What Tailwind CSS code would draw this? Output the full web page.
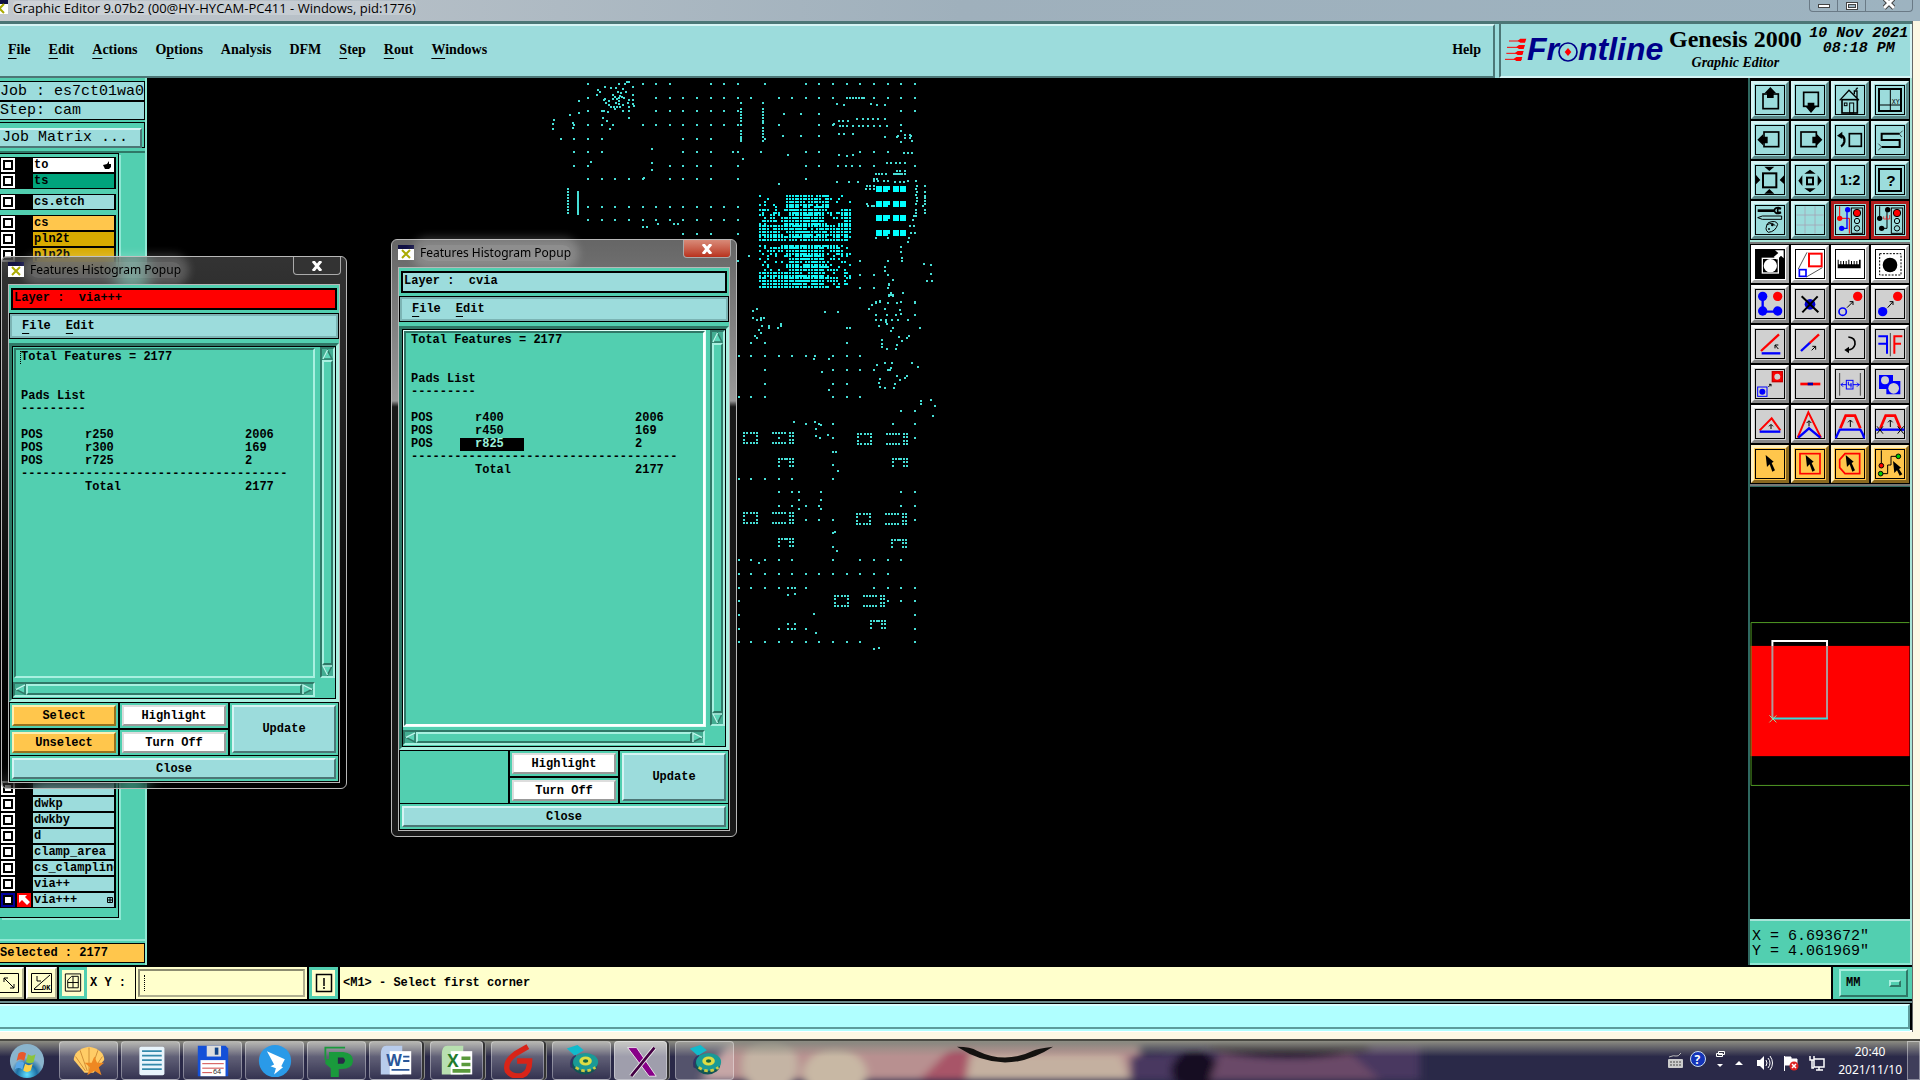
<!DOCTYPE html>
<html lang="en">
<head>
<meta charset="utf-8">
<title>Graphic Editor 9.07b2</title>
<script src="https://cdn.jsdelivr.net/npm/@tailwindcss/browser@4"></script>
</head>
<body class="relative flex h-screen flex-col overflow-hidden bg-black font-['Liberation_Mono',monospace] text-black">

<!-- Main window -->
<div class="flex min-h-0 flex-1 flex-col bg-[#fdf8e4] pb-[7px]">
  <div class="flex h-[21px] shrink-0 items-start justify-between bg-linear-to-r from-[#c3c8cd] via-[#9fb0bc] to-[#9db3c0]">
    <div class="flex h-[15px] items-center gap-[5px]">
      <svg class="h-4 w-2 shrink-0" viewBox="8 0 8 16"><rect x="0" width="16" height="14" fill="#fff"/><rect width="16" height="4" fill="#114"/><path d="M3 4l9 9M12 4l-9 9" stroke="#aa0" stroke-width="2"/></svg>
      <h1 class="rounded bg-white/20 font-['Open_Sans',sans-serif] text-[13px] leading-[14px] whitespace-nowrap">Graphic Editor 9.07b2 (00@HY-HYCAM-PC411 - Windows, pid:1776)</h1>
    </div>
    <div class="mr-[7px] flex h-3 rounded-b border border-t-0 border-[#6a7a86] text-white">
      <button aria-label="Minimize" class="flex w-7 items-center justify-center border-r border-[#6a7a86]"><span class="h-1 w-3 border border-[#444] bg-white"></span></button>
      <button aria-label="Restore" class="flex w-7 items-center justify-center border-r border-[#6a7a86]"><span class="h-2 w-3 border border-[#444] bg-white p-px"><span class="block h-1 border border-[#444] bg-[#9db3c0]"></span></span></button>
      <button aria-label="Close window" class="flex w-[46px] items-center justify-center"><svg class="h-3 w-3" viewBox="0 0 12 12"><path d="M1-2l10 10M11-2l-10 10" stroke="#444" stroke-width="5"/><path d="M1-2l10 10M11-2l-10 10" stroke="#fff" stroke-width="3"/></svg></button>
    </div>
  </div>

  <div class="mr-[7px] flex min-h-0 flex-1 flex-col border-r border-[#666]">
    <!-- Menu and brand -->
    <header class="flex h-[57px] shrink-0 border-t-[3px] border-[#4c7676] bg-[#9cdcdc] font-['Liberation_Serif',serif]">
      <nav class="flex flex-1 items-center gap-[18px] border-y-2 border-r-2 border-t-[#d6f4f4] border-r-[#4c7676] border-b-[#4c7676] pb-[2px] pl-2 text-[14px] leading-5 font-bold shadow-[0_2px_0_#d6f4f4]">
        <a href="#"><u class="underline-offset-4">F</u>ile</a><a href="#"><u class="underline-offset-4">E</u>dit</a><a href="#"><u class="underline-offset-4">A</u>ctions</a><a href="#">O<u class="underline-offset-4">p</u>tions</a><a href="#">Analysis</a><a href="#">DFM</a><a href="#"><u class="underline-offset-4">S</u>tep</a><a href="#"><u class="underline-offset-4">R</u>out</a><a href="#"><u class="underline-offset-4">W</u>indows</a>
        <a href="#" class="mr-3 ml-auto">Help</a>
      </nav>
      <div class="ml-1 flex w-[413px] items-center border-2 border-t-0 border-l-[#4c7676] border-r-[#d6f4f4] border-b-[#d6f4f4] pb-[2px] pl-1">
        <svg class="h-[26px] w-[22px] shrink-0" viewBox="0 0 66 78"><g stroke="#f00" stroke-width="3"><path d="M12 15H60M6 34H56M4 52H54M0 70H50"/></g><g fill="#f00"><path d="M38 14l8-6h18l-4 12H46zM34 33l8-6h18l-4 12H42zM30 51l8-6h18l-4 12H38zM26 69l8-6h18l-4 12H34z"/></g></svg>
        <div class="flex items-center font-['Liberation_Sans',sans-serif] text-[32px] leading-8 font-bold text-[#00008a] italic">
          <span>Fr</span>
          <svg class="mt-[5px] -ml-px h-5 w-5" viewBox="0 0 60 60"><circle cx="30" cy="30" r="27" fill="none" stroke="#00008a" stroke-width="5"/><path d="M30 18l10 12-10 12-10-12z" fill="#f00"/></svg>
          <span>ntline</span>
        </div>
        <div class="ml-1 flex w-[136px] flex-col items-center whitespace-nowrap">
          <span class="text-[24px] leading-7 font-bold">Genesis 2000</span>
          <span class="text-[14px] leading-5 font-bold italic">Graphic Editor</span>
        </div>
        <div class="mb-4 ml-[6px] text-center font-['Liberation_Mono',monospace] text-[15px] leading-[15px] font-bold whitespace-nowrap italic">10 Nov 2021<br>08:18 PM</div>
      </div>
    </header>

    <!-- Workspace -->
    <div class="flex min-h-0 flex-1">
      <aside class="flex w-[147px] shrink-0 flex-col border-r-2 border-[#8fe8d4] bg-[#52cfb0]">
        <div class="mt-[3px] h-[20px] border border-l-0 border-black bg-[#9cdcdc] text-[15px] leading-[19px] whitespace-nowrap">Job : es7ct01wa0</div>
        <div class="h-[19px] border border-l-0 border-black bg-[#9cdcdc] text-[15px] leading-[18px]">Step: cam</div>
        <div class="mt-[2px] h-[26px] border border-l-0 border-black p-[2px] pl-0"><button class="h-full w-full border-2 border-l-0 border-t-[#d6f4f4] border-r-[#4c7676] border-b-[#4c7676] bg-[#9cdcdc] pl-[2px] text-left text-[15px] leading-4">Job Matrix ...</button></div>
        <div class="mt-[3px] h-[2px] bg-[#2f7867]"></div>
        <div class="mr-[26px] flex min-h-0 flex-1 flex-col border-t border-r border-b border-black pb-[9px] shadow-[2px_2px_0_#8fe8d4]">
          <div id="layers-top" class="mt-[3px] mr-[2px]"></div>
          <div class="mr-[2px] flex-1 bg-black"></div>
          <div id="layers-bottom" class="mr-[2px]"></div>
        </div>
        <div class="mt-[21px] h-[2px] bg-[#8fe8d4]"></div>
        <div class="my-[2px] h-[20px] border border-l-0 border-black bg-[#ffc64c] text-[12px] leading-[18px] font-bold">Selected : 2177</div>
      </aside>

      <main class="relative flex-1 overflow-hidden bg-black">
        <svg class="absolute top-0 left-0 h-full w-full"><g transform="translate(-147 -78)"><path id="dots" fill="#46dfd6" shape-rendering="crispEdges"/><path id="core" fill="#14f4f4" shape-rendering="crispEdges"/><path id="bars" fill="#00ffff"/></g></svg>
      </main>

      <aside class="flex w-[164px] shrink-0 flex-col border-r-2 border-l-2 border-l-[#2f6860] border-r-[#a8e4d8] bg-black">
        <div id="tools-a" class="grid grid-cols-4 gap-[2px] border-b-2 border-[#a8e4d8] pt-[3px] pr-px pb-[1px] pl-px"></div>
        <div id="tools-b" class="grid grid-cols-4 gap-[2px] border-t-2 border-b-2 border-[#777] pt-px pr-px pb-[1px] pl-px"></div>
        <div class="h-px bg-[#2f6860]"></div>
        <div class="relative mt-px min-h-0 flex-1">
          <svg class="absolute inset-0 h-full w-full" viewBox="0 0 160 434" preserveAspectRatio="xMidYMin meet"><rect y="159" width="160" height="111" fill="#f00"/><path d="M160 135.500H.5V299.500H160" fill="none" stroke="#509a24"/><path d="M22 159v-5H77v5" fill="none" stroke="#fff" stroke-width="2"/><path d="M22 159v73M77 159v73" stroke="#b09a9a" stroke-width="2"/><path d="M22 232H78" stroke="#35dcdc" stroke-width="2"/><path d="M19 229l7 7M26 229l-7 7" stroke="#9cdc9c"/></svg>
        </div>
        <div class="h-[46px] shrink-0 border-y-2 border-t-[#a8e4d8] border-b-[#8fe8d4] bg-[#52cfb0] pt-[8px] pl-[2px] text-[15px] leading-[15px] whitespace-nowrap"><p>X = 6.693672"</p><p>Y = 4.061969"</p></div>
      </aside>
    </div>

    <!-- Command line -->
    <form class="flex h-[36px] shrink-0 items-stretch border-y-2 border-black bg-[#ffffcc] text-[12px] font-bold">
      <div class="flex gap-[2px] bg-black">
        <button type="button" aria-label="Diagonal" class="w-6 border-2 border-l-0 border-t-white border-r-[#b0b090] border-b-[#b0b090] bg-[#ffffcc]"><svg class="h-7 w-5" viewBox="10 0 20 28"><path d="M6 4.500H28.500V23.500H6M14 9l10 10M14 13V9h4M24 15v4h-4" fill="none" stroke="#000"/></svg></button>
        <button type="button" aria-label="Angle" class="w-[31px] border-2 border-t-white border-l-white border-r-[#b0b090] border-b-[#b0b090] bg-[#ffffcc]"><svg class="h-7 w-[27px]" viewBox="0 0 27 28"><path d="M3.500 4.500h20v19h-20zM6 20L22 6M6 20.500H15M9 7v5h4" fill="none" stroke="#000"/><text x="14" y="21" font-size="7">OK</text></svg></button>
        <button type="button" aria-label="Grid" class="w-[28px] border-[3px] border-[#52cfb0] bg-[#ffffcc]"><svg class="h-[26px] w-[22px]" viewBox="0 0 23 26"><path d="M3.500 3.500h16v18h-16zM6 18V10l4-4h7v12zM11.500 6v12M6 12.500h11" fill="none" stroke="#000"/></svg></button>
      </div>
      <label for="xy" class="w-[48px] pl-[3px] leading-8 whitespace-nowrap"><span>X Y :</span></label>
      <div class="relative w-[174px] border-r-2 border-l border-black p-[2px]"><input id="xy" class="h-full w-full border-2 border-t-[#8c8c70] border-l-[#8c8c70] border-r-[#b0b090] border-b-[#b0b090] bg-[#ffffcc] px-1 outline-none"><span class="absolute top-2 left-2 h-4 border-l border-dotted border-black"></span></div>
      <button type="button" aria-label="Alert" class="w-[31px] border-r-2 border-r-black bg-[#ffffcc] shadow-[inset_0_0_0_3px_#52cfb0]"><svg class="mx-auto h-[26px] w-[22px]" viewBox="0 0 22 26"><path d="M3.500 4.500h15v17h-15zM11 8v8M11 17v2" fill="none" stroke="#000" stroke-width="1.500"/></svg></button>
      <output class="flex-1 pl-[3px] leading-8">&lt;M1&gt; - Select first corner</output>
      <div class="w-[81px] border-l-2 border-black bg-[#52cfb0] py-[2px] pr-1 pl-[6px]">
        <button type="button" class="flex h-full w-full items-center justify-between border-2 border-t-[#a8f0e0] border-l-[#a8f0e0] border-r-[#2f7867] border-b-[#2f7867] px-[5px]">MM<span class="h-[7px] w-3 border-2 border-t-[#a8f0e0] border-l-[#a8f0e0] border-r-[#2f7867] border-b-[#2f7867]"></span></button>
      </div>
    </form>
    <div class="h-[31px] shrink-0 border-t-2 border-b-2 border-t-[#6c8c8c] border-b-white bg-black pt-px pr-[2px] pb-px"><div class="h-full border-y-2 border-r-2 border-t-[#d8ffff] border-r-[#5c9c9c] border-b-[#5c9c9c] bg-[#b0ffff] shadow-[0_2px_0_#b0ffff]"></div></div>
  </div>
</div>

<!-- Popups -->
<div id="popup-via"></div>
<div id="popup-cvia"></div>

<!-- Taskbar -->
<footer class="relative flex h-[41px] shrink-0 items-center overflow-hidden border-t-2 border-[#4a4a44] bg-[#2a2948] font-['Open_Sans',sans-serif] text-white">
  <svg class="absolute inset-0 h-full w-full" viewBox="0 0 1920 40" preserveAspectRatio="none">
    <defs><filter id="soft"><feGaussianBlur stdDeviation="4"/></filter><linearGradient id="gl" x2="0" y2="1"><stop stop-color="#8c8c82"/><stop offset=".4" stop-color="#8c8c82" stop-opacity="0"/></linearGradient></defs>
    <g filter="url(#soft)"><path d="M730 0H1140V40H700z" fill="#b89090"/><ellipse cx="770" cy="25" rx="28" ry="30" fill="#c4b4a4"/><ellipse cx="835" cy="34" rx="32" ry="26" fill="#c8b8a4"/><path d="M950 8l20-2v34h-50z" fill="#a85468"/><path d="M970 14h150l10 26H966z" fill="#c4b0a0"/><path d="M1130 15L1420 0V40H1130z" fill="#4a3860"/><ellipse cx="1195" cy="30" rx="24" ry="20" fill="#151024"/><path d="M1210 0h160v10q-80 14-160 0z" fill="#1c1520"/><path d="M1220 12q70 14 130 0l30 28h-170z" fill="#6a4a68"/></g>
    <rect width="1920" height="40" fill="url(#gl)"/>
    <path d="M957 6Q1005 38 1053 6q-16 2-20 4-28 14-56 0-6-4-20-4z" fill="#141210"/>
  </svg>
  <div class="relative flex flex-1 items-center gap-[3px]">
    <button aria-label="Start" class="flex w-[54px] justify-center"><svg class="h-9 w-[38px]" viewBox="0 0 38 38"><defs><radialGradient id="orb" cy=".9"><stop stop-color="#5fe0ff"/><stop offset=".6" stop-color="#1d6fa5"/><stop offset="1" stop-color="#8ab4cc"/></radialGradient></defs><circle cx="19" cy="19" r="18" fill="url(#orb)"/><path d="M10 11q4-3 8 0l-2 8q-4-3-8 0z" fill="#e8582c"/><path d="M20 12q4 3 8 0l-2 8q-4 3-8 0z" fill="#8cc43c"/><path d="M8 21q4-3 8 0l-2 7q-4-3-8 0z" fill="#5aa8e8"/><path d="M17 22q4 3 8 0l-2 7q-4 3-8 0z" fill="#fcd048"/></svg></button>
    <div id="tasks" class="ml-[2px] flex gap-[3px]"></div>
  </div>
  <div class="relative flex items-center gap-[10px]">
    <svg class="h-4 w-4" viewBox="0 0 16 16"><rect y="6" width="15" height="9" rx="1" fill="#ccc"/><path d="M2 9h11M2 12h11" stroke="#444" stroke-dasharray="2 1"/><path d="M1 4q5-2 7-1t5-3" stroke="#bbb" fill="none"/></svg>
    <svg class="-mt-1 -ml-[4px] h-4 w-4" viewBox="0 0 16 16"><circle cx="8" cy="8" r="7.500" fill="#1434b8" stroke="#cde"/><text x="4.500" y="12.500" font-size="12" font-weight="bold" fill="#fff">?</text></svg>
    <svg class="-mt-1 h-[18px] w-[9px]" viewBox="0 0 9 18"><path d="M2.500 1.500h6v3h-6zM.5 3.500h6v3h-6z" fill="#334" stroke="#fff"/><path d="M1 14h6l-3 3z" fill="#fff"/></svg>
    <svg class="mt-1 h-2 w-2" viewBox="0 0 8 8"><path d="M0 6l4-4 4 4z" fill="#fff"/></svg>
    <svg class="mt-1 ml-1 h-4 w-4" viewBox="0 0 16 16"><path d="M0 5h3l4-4v14l-4-4H0z" fill="#fff"/><path d="M9 5q2 3 0 6M11 3q4 5 0 10M13 1q5 7 0 14" stroke="#fff" fill="none"/></svg>
    <svg class="mt-1 h-4 w-4" viewBox="0 0 16 16"><path d="M1.500 1v15M2 2h6v2h6v6H2z" stroke="#fff" fill="#fff"/><circle cx="11" cy="11" r="4.500" fill="#d22"/><path d="M9 9l4 4M13 9l-4 4" stroke="#fff" stroke-width="1.500"/></svg>
    <svg class="mt-1 h-4 w-4" viewBox="0 0 16 16"><path d="M5 4h10v8H5zM7 15h7M10 12v3M1 1v4h4V1M3 5v8h2" stroke="#fff" stroke-width="1.500" fill="none"/></svg>
    <div class="ml-[3px] text-center font-['Noto_Sans',sans-serif] text-[12px] leading-[18px]">20:40<br>2021/11/10</div>
    <button aria-label="Show desktop" class="-ml-[5px] h-[39px] w-[13px] border border-white/40 bg-white/10"></button>
  </div>
</footer>

<script>
const $ = id => document.getElementById(id);

/* Layer list */
function layer(name, bg, opts = {}) {
  const box = opts.active ? 'border-[#0000a0]' : 'border-white';
  const mark = opts.active ? '<svg class="h-[14px] w-[14px] bg-[#f00]" viewBox="0 0 14 14"><path d="M2 2h8l-2 2 5 5-3 3-5-5-3 3z" fill="#fff"/></svg>' : '';
  return `<label class="flex h-4 items-center bg-black ${opts.gap ? 'mb-[5px]' : ''}">
    <input type="checkbox" class="ml-px h-[14px] w-[14px] appearance-none outline-2 -outline-offset-2 ${opts.active ? 'outline-[#0000a0]' : 'outline-white'} border-4 border-black bg-white bg-clip-padding">
    <span class="flex w-[18px] justify-center">${mark}</span>
    <span class="mr-[2px] flex h-[14px] flex-1 items-center justify-between overflow-hidden pl-px text-[12px] leading-[14px] font-bold ${bg}"><span>${name}</span>${opts.end || ''}</span></label>`;
}
const hand = '<svg class="mr-[3px] h-2 w-2 shrink-0" viewBox="0 0 8 8"><path d="M0 4l4-1 2-3v3h2v3L6 8H2L1 6z"/></svg>';
const plus = '<svg class="mr-px h-[6px] w-[6px] shrink-0" viewBox="0 0 6 6"><path d="M.5.5h5v5h-5zM3 0v6M0 3h6" fill="none" stroke="#000"/></svg>';
$('layers-top').innerHTML = layer('to', 'bg-white', {end: hand}) + layer('ts', 'bg-[#00a47c]', {gap: 1}) + layer('cs.etch', 'bg-[#9cdcdc]', {gap: 1}) +
  layer('cs', 'bg-[#ffc64c]') + layer('pln2t', 'bg-[#d8ab00]') + layer('pln2b', 'bg-[#d8ab00]');
$('layers-bottom').innerHTML = ['', 'dwkp', 'dwkby', 'd', 'clamp_area', 'cs_clampline', 'via++'].map(n => layer(n, 'bg-[#9cdcdc]')).join('') + layer('via+++', 'bg-[#9cdcdc]', {active: 1, end: plus});

/* Tool buttons: drawings use a 90-unit box */
const F = (b, s = '') => `<button aria-label="${s}" class="flex h-[38px] w-[38px] items-center justify-center border-[3px] ${b}">`;
const skins = {
  c: 'border-t-[#d6f4f4] border-l-[#d6f4f4] border-r-[#5c8888] border-b-[#5c8888] bg-[#9cdcdc]',
  r: 'border-[#b01c1c] bg-[#9cdcdc]',
  w: 'border-t-white border-l-white border-r-[#aaa] border-b-[#aaa] bg-white',
  g: 'border-t-white border-l-[#eee] border-r-[#888] border-b-[#888] bg-[#d0d0d0]',
  o: 'border-t-[#fff0c0] border-l-[#fff0c0] border-r-[#8a6820] border-b-[#8a6820] bg-[#ffc64c]'
};
function tool(skin, name, art) {
  return F(skins[skin], name) + `<svg class="h-[30px] w-[30px] shrink-0" viewBox="0 0 90 90"><rect x="1.500" y="1.500" width="87" height="87" fill="none" stroke="#000" stroke-width="3"/>${art}</svg></button>`;
}
const sq = (x, y, w, h, s = 5, c = '#000', f = 'none') => `<rect x="${x}" y="${y}" width="${w}" height="${h}" fill="${f}" stroke="${c}" stroke-width="${s}"/>`;
const ln = (d, c = '#000', w = 3, f = 'none') => `<path d="${d}" fill="${f}" stroke="${c}" stroke-width="${w}"/>`;
const dot = (x, y, r, c) => `<circle cx="${x}" cy="${y}" r="${r}" fill="${c}"/>`;
const light = sq(49, 9, 34, 76, 3) + `<circle cx="66" cy="24" r="11" fill="#f00" stroke="#000" stroke-width="3"/><circle cx="66" cy="48" r="8" fill="none" stroke="#000" stroke-width="3"/><circle cx="66" cy="70" r="8" fill="none" stroke="#000" stroke-width="3"/>`;
$('tools-a').innerHTML = [
  tool('c', 'Pan up', sq(24, 27, 46, 44) + '<path d="M46 6l17 18h-7v15H36V24h-7z"/>'),
  tool('c', 'Pan down', sq(26, 22, 44, 42) + '<path d="M38 53h20v13h5L48 84 33 66h5z"/>'),
  tool('c', 'Home', sq(21, 44, 46, 40, 5) + ln('M14 46L42 16 72 46M58 28V18H66V38M62 14l6-6', '#000', 4) + sq(28, 54, 8, 8, 3) + sq(44, 54, 12, 30, 3)),
  tool('c', 'Coordinates', sq(12, 12, 66, 66, 6) + ln('M46 12V78M12 60H78', '#000', 3) + '<text x="50" y="56" font-size="20" font-family="Liberation Mono">XY</text>'),
  tool('c', 'Pan left', sq(27, 21, 44, 44) + '<path d="M7 44L24 28v7h14v20H24v6z"/>'),
  tool('c', 'Pan right', sq(18, 21, 46, 44) + '<path d="M82 44L66 28v7H52v20h14v6z"/>'),
  tool('c', 'Previous view', sq(43, 26, 36, 38) + ln('M12 32H20Q30 36 28 50 26 60 18 64', '#000', 7) + '<path d="M6 32l16-12v22z"/>'),
  tool('c', 'Serpentine', ln('M74 26H20V45H74V66H20', '#000', 6) + ln('M74 26l9-9M80 36l-6-8M20 66l-10-10M20 66l-10 9', '#000', 2)),
  tool('c', 'Zoom in', sq(24, 25, 40, 42, 6) + '<path d="M43 18L28 5h30zM43 72L28 86h30zM16 45L3 30v28zM74 45l14-15v28z"/>'),
  tool('c', 'Zoom out', sq(36, 38, 18, 20, 6) + '<path d="M45 14l17 12H28zM45 82l17-12H28zM10 47l12-16v32zM80 47L68 31v32z"/>'),
  tool('c', 'Scale 1:2', '<text x="15" y="61" font-size="42" font-weight="bold" font-family="Liberation Sans">1:2</text>'),
  tool('c', 'Help', sq(12, 12, 66, 66, 6) + '<text x="34" y="62" font-size="46" font-weight="bold" font-family="Liberation Sans">?</text>'),
  tool('c', 'Setup', ln('M8 17H58', '#000', 8) + ln('M78 11A11 9 0 1 0 78 22M78 11H68V22H78', '#000', 5) + ln('M8 38l14-5H80V43H22z', '#000', 3) + ln('M40 53Q64 44 68 58 62 80 40 82 26 74 40 53zM34 60Q54 50 60 62', '#000', 3) + dot(52, 60, 4, '#000') + dot(42, 72, 3, '#000')),
  tool('c', 'Grid', ln('M30 4V86M60 4V86M4 30H86M4 60H86', '#a89cb0', 2)),
  tool('r', 'Net on', ln('M14 4V40H43V86', '#f00') + ln('M20 70H36V14', '#00f', 4) + dot(14, 40, 8, '#f00') + dot(38, 14, 8, '#00f') + dot(20, 70, 8, '#00f') + light),
  tool('r', 'Net off', ln('M14 4V40M20 70H36V14', '#000', 3) + ln('M26 34V42H44V30M34 32V42', '#f00', 2) + dot(14, 40, 8, '#000') + dot(38, 14, 8, '#000') + dot(20, 70, 8, '#000') + light)
].join('');

$('tools-b').innerHTML = [
  tool('w', 'Invert', '<rect width="90" height="90"/>' + sq(22, 28, 48, 44, 4, '#fff') + dot(46, 50, 20, '#fff') + '<path d="M56 24L70 12 60 4H86V28L78 20 66 32z" fill="#fff"/>'),
  tool('w', 'Resize', sq(42, 14, 38, 38, 6, '#f00') + sq(13, 62, 20, 20, 5, '#00f') + ln('M10 60L36 10M34 84L82 56', '#000', 2)),
  tool('w', 'Measure', '<path d="M8 58V32h3v14h5V36h3v10h5V36h3v10h5V36h3v10h5V32h3v14h5V36h3v10h5V36h3v10h5V36h3v10h5V32h5v26z"/>'),
  tool('w', 'Select pad', `<rect x="14" y="14" width="64" height="64" fill="none" stroke="#000" stroke-width="3" stroke-dasharray="6 4"/>` + dot(45, 48, 22, '#000')),
  tool('g', 'Net', ln('M23 24V68H68', '#00f', 7) + dot(23, 22, 14, '#00f') + dot(23, 66, 14, '#00f') + dot(68, 66, 14, '#00f') + dot(68, 22, 14, '#f00')),
  tool('g', 'Delete', dot(45, 46, 16, '#00c') + ln('M20 22L70 70M68 22L22 70', '#000', 6)),
  tool('g', 'Move', `<circle cx="23" cy="68" r="11" fill="none" stroke="#00f" stroke-width="5"/>` + dot(68, 22, 14, '#f00') + ln('M36 56L54 38M44 38H54V48')),
  tool('g', 'Copy', dot(23, 68, 14, '#00f') + dot(68, 22, 14, '#f00') + ln('M38 56L54 38M44 38H54V48')),
  tool('g', 'Rotate', ln('M18 66L72 16', '#f00', 7) + ln('M20 73H76', '#00f', 7) + ln('M70 60L60 48M60 58V48H70')),
  tool('g', 'Stretch', ln('M18 66L46 40', '#00f', 7) + ln('M44 42L72 16', '#f00', 7) + ln('M50 64L62 52M52 52H62V62')),
  tool('g', 'Arc', ln('M40 24Q62 26 60 46 56 62 38 63', '#000', 5) + '<path d="M28 63l14-10v20z"/>'),
  tool('g', 'Mirror', ln('M10 22H36V74M10 44H36', '#00f', 6) + ln('M46 12V82', '#000', 2) + ln('M82 22H58V74M58 44H78', '#f00', 6)),
  tool('g', 'Substitute', sq(8, 54, 28, 28, 3, '#00f') + dot(22, 68, 9, '#00f') + sq(52, 8, 30, 30, 4, '#c00', '#f00') + dot(67, 23, 9, '#d0d0d0') + ln('M40 54L48 46M42 46H48V52')),
  tool('g', 'Break', ln('M16 45H76', '#f00', 8) + ln('M38 45H54', '#00a', 8)),
  tool('g', 'Spacing', ln('M14 12V80M76 12V80', '#000', 2) + ln('M18 47H34M24 41l-6 6 6 6M54 47H74M66 41l6 6-6 6', '#00f') + sq(34, 34, 20, 26, 3, '#00f') + ln('M40 38V48H50M48 42V56', '#00f')),
  tool('g', 'Merge', '<path d="M12 18H54V36H76V76H34V60H12z" fill="#00f"/>' + dot(30, 34, 12, '#d0d0d0') + dot(56, 58, 16, '#d0d0d0')),
  tool('g', 'Raise corner', ln('M14 64L50 28 76 64', '#f00', 6) + ln('M14 68H76', '#00f', 7) + ln('M48 60V48M42 52l6-6 6 6')),
  tool('g', 'Raise peak', ln('M8 86L40 10 78 86', '#f00', 6) + ln('M10 86L42 58 76 86', '#00f', 7) + ln('M42 52V36M35 42l7-7 7 7')),
  tool('g', 'Raise trapezoid', ln('M16 58L32 20H60L76 58', '#f00', 8) + ln('M2 88Q8 74 14 62H76Q84 74 88 88', '#00f', 7) + ln('M46 54V34M39 40l7-7 7 7')),
  tool('g', 'Trim trapezoid', ln('M16 58L32 20H60L76 58', '#f00', 8) + ln('M2 62H88', '#00f', 7) + ln('M46 54V34M39 40l7-7 7 7M6 52l18 22M24 52L6 74M68 52l18 22M86 52L68 74')),
  tool('o', 'Select', '<path d="M32 18L56 38 50 42 60 64 52 68 44 46 36 54z"/>'),
  tool('o', 'Select rectangle', sq(15, 14, 60, 60, 5, '#f00') + '<path d="M32 18L56 38 50 42 60 64 52 68 44 46 36 54z"/>'),
  tool('o', 'Select polygon', ln('M30 14H74V74H30L14 56V32z', '#f00', 5) + '<path d="M32 18L56 38 50 42 60 64 52 68 44 46 36 54z"/>'),
  tool('o', 'Select net', ln('M19 4V48M18 74H38V48H48V22H66', '#000', 3) + `<g stroke="#000" stroke-width="3">${dot(19, 50, 7, '#f00')}${dot(17, 74, 7, '#0c0')}${dot(70, 22, 7, '#0c0')}</g>` + '<path d="M54 36L78 56 72 60 82 76 74 80 66 64 58 72z"/>')
].join('');

/* Drill view: row lists "y:x,x,..." at three units per pixel */
const sheetA = `42:144,237,256,309,348,390,513,552,594,675,798,837,879,921,960,1002,1044,1083,1125;37:262,267;51:195,279;54:213,228;57:249;60:174;66:180,234,258;75:171,219,279;70:243;77:240;81:225,246;84:252,237,144,348,390,429,471,513,552,594,633,717,756,798,837,879,921,930,939,948,957,965,972,1002,1044,1083,1125;87:195,219,231;91:267,279,192;94:117,237,207;99:198,228,264,603,669;102:237,279,891,993;104:249,207,912,1011,1035;109:282;111:213,222,231,240,267;118:225,603,669;123:144,186,192,249,267,348,390,429,471,513,552,594,1083,1125;127:204,603,669;129:117;132:732,783,837;135:90,603,669;144:189,267,603,669;150:42;153:201,603,669,897,909,924;147:951,969,984,999,1014,1035;159:99,669;162:39,882;165:101,144,186,219,309,348,390,429,471,513,552,594,603,717,837,879,1083;167:900,909,921,939,957,969,984,1002,1020,1041;174:99,669;177:39,210;183:603,669,1083;192:603,669,897,912,939;195:1095,1110;198:729,783,837,1074,1113;201:603,669,1035,1071;203:1095,1110;207:63,102,144,186,429,471,513,603,675;213:603,669,1116;216:1083;237:336;246:102,144,186,429,471,513,579,594,663,798,837,960,1002,1044;249:1092,1104,1116;255:744,897,939;258:921;267:609;276:153;279:336,1041,1053,1068,1080,1095;288:102,144,390,429,471,513,594,798,837,894,918,936,960,1002,1125;300:336;303:1070,1080,1095;312:1008,1017,1026,1038,1062,1068,1074,1080,1086,1095;327:144,186,225,267,309,390,429,471,513,594,798,1011,1002;324:312;333:1002,1014,1032,1044,1104,1128;336:891,927,954,1065,1080,1092;342:717;348:981,990,1002,1131,1155;357:84,978,990,1002,1129;366:84,1131,1155;375:84,1129;378:1155;384:84,1131,1155;393:84,1131,1155;402:84,981,1129,1155;408:984,996,1002,1149;411:84,144,186,225,267,309,348,390,429,471,513,552,594;420:84,1129,1155;429:84,1129,1155;438:1129,1122;450:144,186,225,267,309,348,390,429,471,513,552,594,1119;462:354,402,414;471:309,321;468:1110,1122;489:1113,1125;492:429,471,513,594;504:1008,1044,1107;516:1104;531:1083;546:1083;558:627;564:1086;573:594,960,1044,1086;582:1152;585:1173;591:1035;603:1035;612:1173;615:960,1002,1044;633:1161,1176;630:1059;642:1047;654:960,1002,1044;669:1053;678:1047,1059;696:1083,1125,1008,1020`;
const sheetB = `3:681,696;15:567;24:480,522,564;39:609;45:567,573,579;63:540;69:528,645,564,591;75:516;87:507,171,555;93:159;96:375,414;90:600;105:528,561,588,645;102:603;114:159,183,192;120:171,183,528,543,558,576,594,624;126:558;132:561,243;138:186,207,243,537;144:207,234,441,450,579,660;153:573;150:177;159:183;168:165,627;171:597;174:171,621;180:546;183:606;189:153,195,441;193:546;195:591;201:546;207:561,588;228:153,195,237,276,318,345,399,441,480;237:342,387;249:555,576,636;255:531;261:654;264:573;270:195,399,441,480,522,564,570;276:366;288:591,621;294:615;297:540;300:600;309:537;312:195,399,441,585;321:540;324:555,582;330:387;351:153,195,399,441,480;360:693;363:663;372:663;378:705;393:603,645;408:699;426:282,345;432:318,357,399,579,645;435:363;447:348;465:384;468:348;474:360,399,645,237;516:399,408;555:399;573:414;597:153,195,237,276,399;636:237,276,297,363,603,645;660:297,363;678:237,276,318,357,603,645;687:297,363;720:318,357,399,645;756:405;759:399;801:399;813:411;840:153,195,237,276,399,480,522,564,603;849:177;882:153,195,237,276,318,357,399,441,480,522,564;924:153,195,237,264,276,285,318,522,564,603,645;942:285;945:264;963:564,603,645;1002:342;1005:645;1032:264,285;1047:237,264,276,285,318,645;1059:348;1086:153,195,237,276,318,357,399,441,480,645;1104:537;1107:522;228:116;351:116;597:116;840:116;882:116;924:116;963:116;1005:116;1047:116;1086:116`;
const px = (x, y) => `M${Math.round(x) - 1} ${Math.round(y) - 1}h2v2h-2z`;
let d = '';
const plot = (sheet, ox, oy) => sheet.split(';').forEach(r => { const [y, xs] = r.split(':'); xs.split(',').forEach(x => d += px(ox + x / 3, oy + y / 3)); });
plot(sheetA, 540, 70);
plot(sheetB, 700, 280);
const put = (ox, oy, pts) => pts.forEach(([x, y]) => d += px(700 + (ox + x) / 3, 280 + (oy + y) / 3));
const ring = [[0,0],[10,0],[20,0],[30,0],[39,0],[0,10],[39,10],[0,20],[39,20],[0,30],[10,30],[20,30],[30,30],[39,30]];
const comb = [0, 9, 18, 27, 36, 51, 60].flatMap(x => [[x, 0], [x, 30]]).concat([[51, 10], [60, 10], [51, 20], [60, 20]]);
const gate = [[0,0],[9,0],[18,0],[24,0],[33,0],[42,0],[0,10],[33,10],[42,10],[0,20],[33,20],[42,20]];
[[132,459],[474,462],[132,699],[471,702],[405,948]].forEach(p => put(p[0], p[1], ring));
[[219,459],[561,462],[219,699],[558,702],[492,948]].forEach(p => put(p[0], p[1], comb));
[[237,537],[579,537],[237,777],[576,780],[513,1023]].forEach(p => put(p[0], p[1], gate));
$('dots').setAttribute('d', d + 'M577 191h2v24h-2z');

/* Ball grid array */
let seed = 7, core = '';
const rnd = () => (seed = (seed * 16807) % 2147483647) / 2147483647;
for (let j = 0; j < 34; j++) for (let i = 0; i < 34; i++) {
  const x = 660 + i * 8.2, y = 379 + j * 8.2, mid = x > 745 && x < 850;
  let p = y < 420 ? (x > 740 && x < 868 ? .85 : .14) : y < 462 ? (mid ? .97 : x > 905 ? .9 : .45) : y < 512 ? .88 : y < 520 ? 0 : y < 545 ? (mid ? 1 : .6) : y < 608 ? (mid ? .96 : .38) : (mid ? .98 : x < 745 ? .9 : .4);
  if (rnd() < p) {
    core += px(540 + x / 3, 70 + y / 3);
    if (mid && rnd() < .3) core += px(541 + x / 3, 70 + y / 3);
  }
}
$('core').setAttribute('d', core);
$('bars').setAttribute('d', [186, 201, 215, 230].map(y => `M876 ${y}h6v6h-6zM883 ${y}h7v4h-2v2h-5zM893 ${y}h6v6h-6zM900 ${y}h6v6h-6z`).join(''));

/* Histogram popups */
const up = 'border-t-[#a8f0e0] border-l-[#a8f0e0] border-r-[#2f7867] border-b-[#2f7867]';
const dn = 'border-t-[#2f7867] border-l-[#2f7867] border-r-[#a8f0e0] border-b-[#a8f0e0]';
const tri = (p, lit) => `<svg class="h-[11px] w-[11px] shrink-0 bg-[#43ad92]" viewBox="0 0 11 11"><path d="${p}" fill="#5cd6b8" stroke="#2f7867" stroke-width="1.500"/><path d="${lit}" fill="none" stroke="#b4f6e8" stroke-width="1.500"/></svg>`;
const btn = (t, c) => `<div class="h-full bg-[#52cfb0] p-[2px]"><button class="h-full w-full border-2 ${c}">${t}</button></div>`;
const cyan = 'border-t-[#d6f4f4] border-l-[#d6f4f4] border-r-[#4c7676] border-b-[#4c7676] bg-[#9cdcdc]';
const gold = 'border-t-[#ffeeb0] border-l-[#ffeeb0] border-r-[#96701e] border-b-[#96701e] bg-[#ffc64c]';
const white = 'border-t-[#ddd] border-l-[#ddd] border-r-[#999] border-b-[#999] bg-white';
function popup(o) {
  const rows = o.rows.map(r => `<tr><td>POS</td><td><span class="block w-16 pl-[15px] ${r[2] ? 'bg-black text-[#9cf0dc]' : ''}">${r[0]}</span></td><td>${r[1]}</td></tr>`).join('');
  return `<section class="absolute ${o.pos} flex w-[346px] flex-col rounded-md border border-[#b8b8b8] ${o.glass} p-[6px] pt-0 pb-[5px] backdrop-blur-sm">
  <div class="flex h-[27px] shrink-0 items-start justify-between">
    <div class="mt-[5px] flex items-center gap-[6px]"><svg class="h-4 w-4" viewBox="0 0 16 16"><path fill="#fff" d="M0 0h16v15H0z"/><path fill="#114" d="M0 0h16v4H0z"/><path d="M4 5l8 8M12 5l-8 8" stroke="#aa0" stroke-width="2"/></svg><h2 class="rounded-full ${o.glow} font-['Noto_Sans',sans-serif] text-[12px] leading-4 whitespace-nowrap">Features Histogram Popup</h2></div>
    <button aria-label="Close popup" class="-mr-px flex h-[18px] w-12 items-center justify-center rounded-b border border-t-0 border-[#aaa] ${o.close}"><svg class="h-[10px] w-[12px]" viewBox="0 0 12 10"><path d="M2 0l8 10M10 0L2 10" stroke="#fff" stroke-width="3"/></svg></button>
  </div>
  <div class="flex min-h-0 flex-1 flex-col border border-[#b8b8b8] bg-[#52cfb0] text-[12px] font-bold">
    <div class="mx-[2px] mt-[3px] h-[22px] shrink-0 border-2 border-black pl-px leading-[17px] whitespace-pre ${o.bar}">Layer :  ${o.name}</div>
    <nav class="mt-[3px] flex h-[26px] shrink-0 items-center gap-[15px] border border-black bg-[#9cdcdc] pl-3 shadow-[inset_0_0_0_2px_#7cb4b4]"><a href="#"><u class="underline-offset-4">F</u>ile</a><a href="#"><u class="underline-offset-4">E</u>dit</a></nav>
    <div class="mt-1 flex min-h-0 flex-1 flex-col border-[3px] ${dn}">
      <div class="flex min-h-0 flex-1 flex-col border border-black pb-px">
        <div class="flex min-h-0 flex-1">
          <div class="relative mt-px ml-px flex-1 border-2 ${o.edge} pt-px pl-[5px]">${o.select ? '<span class="absolute top-px left-1 h-[13px] border-l border-dotted border-black"></span>' : ''}
            <table class="w-full table-fixed text-left leading-[13px]"><colgroup><col class="w-[49px]"><col class="w-[175px]"><col></colgroup>
            <tr><td colspan="3" class="whitespace-nowrap">Total Features = 2177</td></tr><tr class="h-[26px]"><td></td></tr>
            <tr><td colspan="3">Pads List</td></tr><tr class="h-[26px] align-top"><td colspan="3">---------</td></tr>${rows}
            <tr><td colspan="3" class="whitespace-nowrap">-------------------------------------</td></tr>
            <tr><td></td><td class="pl-[15px]">Total</td><td>2177</td></tr></table>
          </div>
          <div class="ml-[5px] flex w-[15px] flex-col items-center border-2 ${dn}">${tri('M1 10L5.5 1 10 10z', 'M1 10L5.5 1')}<div class="w-[11px] flex-1 border-2 ${up}"></div>${tri('M1 1H10L5.5 10z', 'M10 1H1L5.5 10')}</div>
        </div>
        <div class="mt-[4px] mr-[20px] flex h-[15px] items-center border-2 ${dn}">${tri('M10 1L1 5.5 10 10z', 'M10 1L1 5.5')}<div class="h-[11px] flex-1 border-2 ${up}"></div>${tri('M1 1L10 5.5 1 10z', 'M1 10V1L10 5.5')}</div>
      </div>
    </div>
    <div class="grid h-[54px] shrink-0 grid-cols-[108px_108px_1fr] grid-rows-2 gap-[2px] bg-black p-px">
      ${o.select ? btn('Select', gold) : '<div class="row-span-2 bg-[#52cfb0]"></div>'}${btn('Highlight', white)}<div class="row-span-2 h-full bg-[#52cfb0] p-[2px]"><button class="h-full w-full border-2 ${cyan}">Update</button></div>${o.select ? btn('Unselect', gold) : ''}${btn('Turn Off', white)}
    </div>
    <div class="h-[26px] shrink-0 border-x border-b border-black">${btn('Close', cyan)}</div>
  </div></section>`;
}
$('popup-via').innerHTML = popup({pos: 'left-px top-[256px] h-[533px]', glass: 'bg-linear-to-b from-[#555]/60 to-black/40', glow: 'bg-white/25 shadow-[0_0_8px_8px_rgba(255,255,255,0.2)]', close: 'bg-[#333]', bar: 'bg-[#f00]', name: 'via+++', edge: dn, select: 1, rows: [['r250', 2006], ['r300', 169], ['r725', 2]]});
$('popup-cvia').innerHTML = popup({pos: 'left-[391px] top-[239px] h-[598px]', glass: 'bg-linear-to-b from-[#666] from-0% via-[#999] via-27% to-[#181818] to-28%', glow: 'bg-white/25 shadow-[0_0_8px_8px_rgba(255,255,255,0.2)]', close: 'bg-linear-to-b from-[#d88a78] to-[#b8301c]', bar: 'bg-[#9cdcdc]', name: 'cvia', edge: 'border-t-[#2f7867] border-l-[#2f7867] border-r-white border-b-white shadow-[0_0_0_1px_#e0fff8]', rows: [['r400', 2006], ['r450', 169], ['r825', 2, 1]]});

/* Taskbar programs */
const disc = '<path d="M2 5l12-4 7 6-10 6z" fill="#1bc"/><path d="M12 12q-8 4-6 14l8 4z" fill="#336"/><ellipse cx="22" cy="23" rx="14" ry="11" fill="#155"/><ellipse cx="23" cy="20" rx="14" ry="10" fill="#1a9a96"/><path d="M12 26q10 8 22 0" stroke="#cc4" stroke-width="3" fill="none" stroke-dasharray="4 3"/><ellipse cx="23" cy="19" rx="7" ry="5" fill="#dd4"/><ellipse cx="23" cy="19" rx="3" ry="2" fill="#164"/>';
const apps = [
  ['Shell', '<path d="M19 3Q36 6 36 18L24 32H14L2 18Q2 6 19 3z" fill="#fc6"/><path d="M19 30V4M17 30L9 7M21 30l8-23M15 30L4 14M23 30l11-16" stroke="#c83"/><path d="M25 14l3 7 8 0-6 5 3 9-8-5-8 5 3-9-6-5 8 0z" fill="#e82"/>'],
  ['Notes', '<rect x="6" y="3" width="28" height="32" rx="2" fill="#e8f4fc"/><path d="M9 8H31M9 13H31M9 18H31M9 23H31M9 28H31" stroke="#38a" stroke-width="2"/>'],
  ['Floppy', '<path d="M2 2H33L36 5V36H2z" fill="#1450d8"/><path d="M12 2H28V14H12z" fill="#ddd"/><path d="M21 4h4v8h-4z" fill="#148"/><path d="M5 18H33V36H5z" fill="#fff"/><path d="M7 22H31M7 27H31M7 32H18" stroke="#c33"/><text x="19" y="34" font-size="8" fill="#222">64</text>'],
  ['Bird', '<circle cx="19" cy="19" r="18" fill="#2a9ae8"/><path d="M10 8l20 9-4 8 2 1-10 8 2-7-6-2 4-2z" fill="#fff"/>'],
  ['P', '<path d="M6 18V4H28" stroke="#1a9a3c" stroke-width="2" fill="none"/><path d="M10 9H26Q37 10 37 19 36 28 24 28H21V37H12V27L6 22V17H10z" fill="#1a9a3c"/><path d="M20 15h6q4 3 0 7h-6z" fill="#2a2948"/>'],
  ['Word', '<path d="M8 2H26V34H2V12Q2 2 8 2z" fill="#b8ccec"/><rect x="12" y="8" width="24" height="26" fill="#fff"/><path d="M27 14H34M27 19H34M14 29H34" stroke="#2a5699" stroke-width="2"/><text x="8" y="25" font-size="18" font-weight="bold" fill="#2a5699">W</text>', 1],
  ['Excel', '<path d="M8 2H26V34H2V12Q2 2 8 2z" fill="#b8e0b0"/><rect x="12" y="8" width="24" height="26" fill="#fff"/><path d="M24 14H34V18H24zM24 21H34V25H24zM14 28H34V32H14z" fill="#5a9a3c"/><text x="8" y="26" font-size="19" font-weight="bold" fill="#227a2c">X</text>', 1],
  ['G', '<path d="M30 3L16 11Q4 20 7 30 13 38 24 35 32 32 32 19H18" stroke="#d82418" stroke-width="6" fill="none"/>', 1],
  ['Disc', disc],
  ['Xming', '<path d="M4 4H14L36 36H28z" fill="#808" stroke="#eee"/><path d="M34 4L8 36" stroke="#eee" stroke-width="5"/><path d="M34 4L8 36" stroke="#404" stroke-width="3"/>', 2],
  ['Disc', disc, 3]
];
$('tasks').innerHTML = apps.map(([n, art, k]) => `<button aria-label="${n}" class="flex h-[39px] shrink-0 items-center justify-center rounded-sm border border-white/35 ${k === 2 ? 'bg-white/55' : k === 3 ? 'bg-white/20' : 'bg-linear-to-b from-white/40 to-white/5'} ${k === 1 || k === 2 ? 'mr-[5px] w-[53px] shadow-[2px_0_0_#333,3px_0_0_#888]' : 'w-[59px]'}"><svg class="h-[34px] w-[34px]" viewBox="0 0 38 38">${art}</svg></button>`).join('');
</script>
</body>
</html>
